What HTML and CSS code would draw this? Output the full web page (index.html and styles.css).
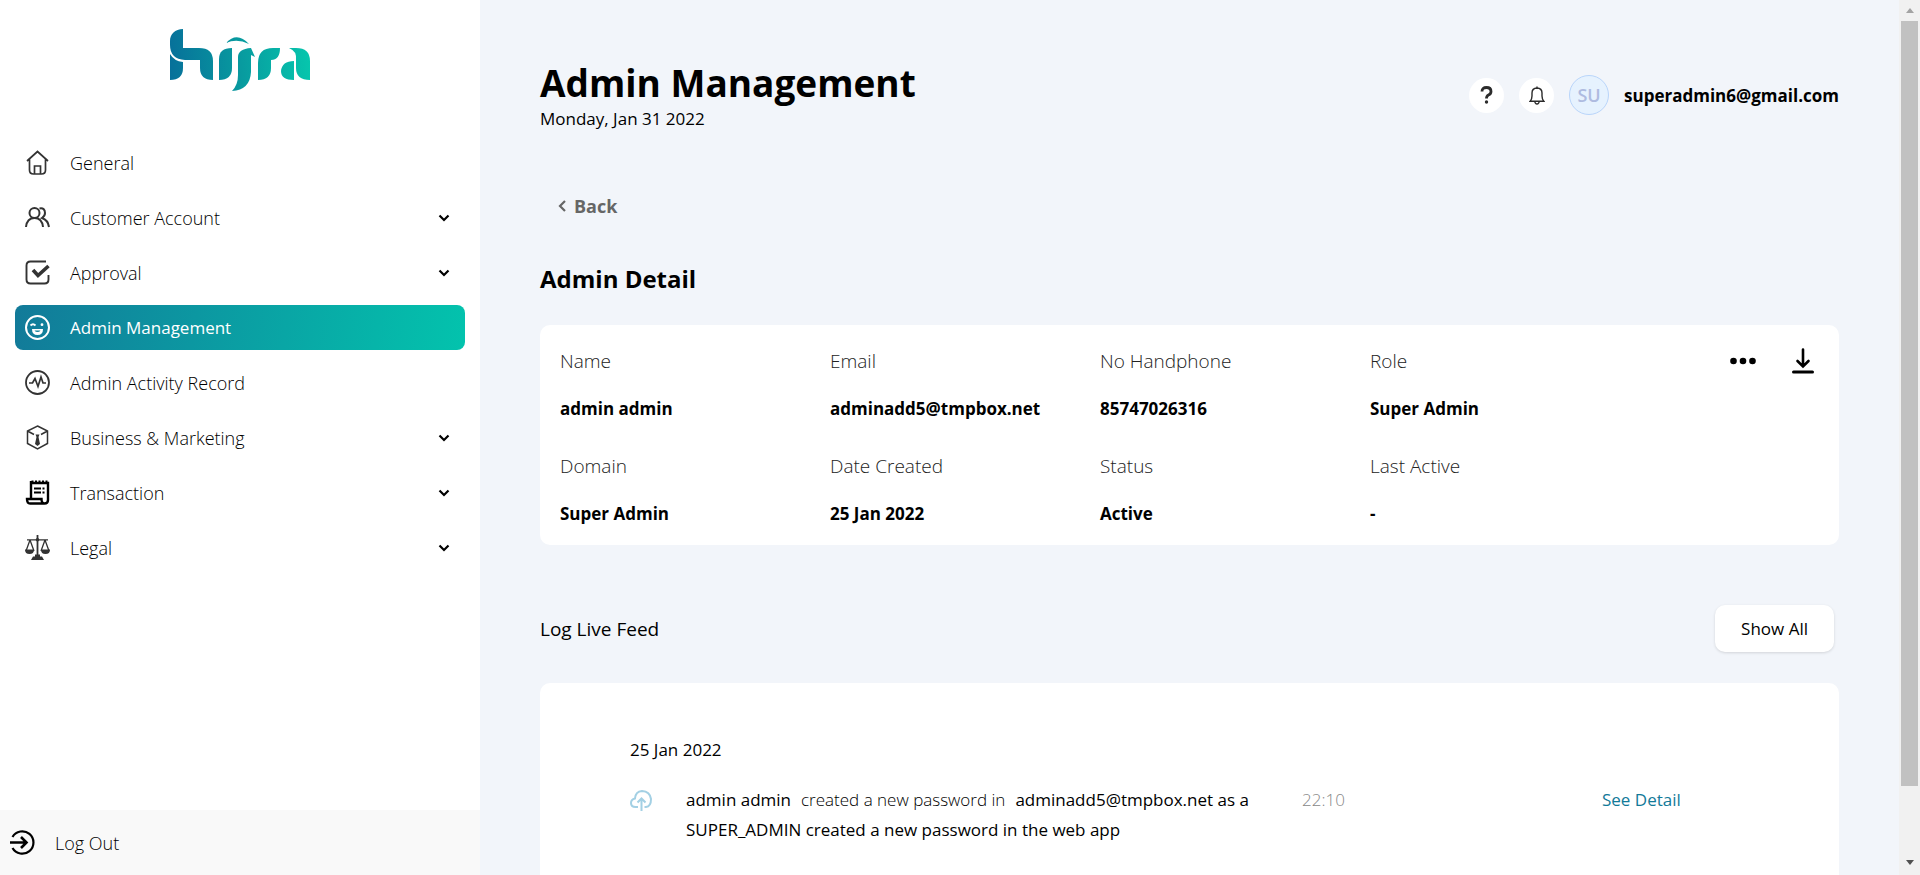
FILE: index.html
```html
<!DOCTYPE html>
<html lang="en">
<head>
<meta charset="utf-8">
<title>Admin Management</title>
<link rel="stylesheet" href="styles.css">
</head>
<body>
<svg class="defs" aria-hidden="true">
  <symbol id="chevron" viewBox="0 0 12 12"><path d="M1.500 3.500 6 8l4.500-4.500" fill="none" stroke="currentColor" stroke-width="2.200"/></symbol>
</svg>
<div class="app">
  <aside class="sidebar">
    <a class="logo" href="#" aria-label="hijra">
      <svg viewBox="0 0 140 62" width="140" height="62">
        <defs><linearGradient id="brand" gradientUnits="userSpaceOnUse" x1="0" y1="30" x2="140" y2="24"><stop offset="0" stop-color="#07719a"/><stop offset=".5" stop-color="#089a9f"/><stop offset="1" stop-color="#06c6ad"/></linearGradient></defs>
        <g fill="url(#brand)">
          <path d="M0 12C0 5 5 0 13 0V19H29Q43 19 43 32V51Q30 51 30 39V31H15Q0 30 0 16Z"/>
          <path d="M0 25Q4 32 13 33V39Q13 51 0 51Z"/>
          <path d="M49 30Q49 19 62 19V39Q62 51 49 51Z"/>
          <path d="M56 14Q67 2 79 15Q67 9 56 14Z"/>
          <path d="M68 28Q68 20 81 19L85 28 81 26V43Q80 61 62 62Q68 56 68 46Z"/>
          <path d="M88 34Q88 19 103 19H110Q110 31 101 31V39Q101 51 88 51Z"/>
          <path d="M124 32V51Q111 51 111 42Q112 32 124 32ZM119 19H126Q140 19 140 32V51Q126 51 126 39V31Q127 22 119 19Z"/>
        </g>
      </svg>
    </a>
    <nav class="nav">
      <a class="item" href="#">
        <svg class="icon" viewBox="0 0 25 25"><path d="M2 11 12.500 1.500 23 11M4.500 9.500V20q0 4 4 4h8q4 0 4-4V9.500M9.500 24v-8h6v8" fill="none" stroke="currentColor" stroke-width="1.700"/></svg>
        <span>General</span></a>
      <a class="item" href="#">
        <svg class="icon" viewBox="0 0 25 25"><g fill="none" stroke="currentColor" stroke-width="2"><circle cx="9.500" cy="8" r="5"/><path d="M1 22Q2 13 9.500 13T18 22M14.500 3.500Q20 2.500 20 8 20 11 17 13 23 15 24 22"/></g></svg>
        <span>Customer Account</span><svg class="chev"><use href="#chevron"/></svg></a>
      <a class="item" href="#">
        <svg class="icon" viewBox="0 0 25 25"><path d="M21 1.500H5.500q-4 0-4 4v14q0 4 4 4h14q4 0 4-4V15" fill="none" stroke="currentColor" stroke-width="1.900"/><path d="m8 10 5 5.500L23.500 6" fill="none" stroke="currentColor" stroke-width="3.600"/></svg>
        <span>Approval</span><svg class="chev"><use href="#chevron"/></svg></a>
      <a class="item active" href="#" aria-current="page">
        <svg class="icon" viewBox="0 0 25 25"><circle cx="12.500" cy="12.500" r="11.500" fill="none" stroke="currentColor" stroke-width="2"/><path d="M5.500 10.500Q8 8 10.500 10.500" fill="none" stroke="currentColor" stroke-width="1.800"/><circle cx="17" cy="9.700" r="1.400" fill="currentColor"/><path d="M7 14h11q0 6-5.500 6T7 14Z" fill="currentColor"/><path d="M9.500 15.500h6q-1 1.500-3 1.500t-3-1.500Z" fill="#12839a"/></svg>
        <span>Admin Management</span></a>
      <a class="item" href="#">
        <svg class="icon" viewBox="0 0 25 25"><g fill="none" stroke="currentColor" stroke-width="1.800"><circle cx="12.500" cy="12.500" r="11.500"/><path d="M4 13h3.500L10 8.500l3 8L16 7l2 6h3" stroke-width="1.700"/></g></svg>
        <span>Admin Activity Record</span></a>
      <a class="item" href="#">
        <svg class="icon" viewBox="0 0 25 25"><path d="M12.500 1 22.500 6v12.500l-10 5.500-10-5.500V6ZM2.500 6 9 9.500M22.500 6 16 9.500" fill="none" stroke="currentColor" stroke-width="1.500"/><path d="M10.500 9.500h4l-1 2.500 1.500 7-2.500 2-2.500-2 1.500-7Z" fill="currentColor"/></svg>
        <span>Business &amp; Marketing</span><svg class="chev"><use href="#chevron"/></svg></a>
      <a class="item" href="#">
        <svg class="icon strong" viewBox="0 0 25 25"><path d="M6 1v18M6 3h17V20q0 3.500-3.500 3.500H5Q2 23.500 2 19h14.500q0 4.500 3 4.500" fill="none" stroke="currentColor" stroke-width="2.400"/><path d="M6.500 1.300H23" stroke="currentColor" stroke-width="1.800" stroke-dasharray="2 1.500"/><path d="M9 8.500h7M9 12.500h7M17.500 8.500h2M17.500 12.500h2" stroke="currentColor" stroke-width="2"/></svg>
        <span>Transaction</span><svg class="chev"><use href="#chevron"/></svg></a>
      <a class="item" href="#">
        <svg class="icon" viewBox="0 0 25 25"><g fill="none" stroke="currentColor" stroke-width="1.300"><path d="M2 4.800h21M5 5 1 16M5 5l4 11M20 5l-4 11M20 5l4 11"/><path d="M12.500 0v20" stroke-width="1.800"/></g><path d="M0 14.500h9q0 4.500-4.500 4.500T0 14.500ZM16 14.500h9q0 4.500-4.500 4.500T16 14.500ZM10 19.500h5v2h-5ZM8 21.500h9l2 3.500H6Z" fill="currentColor"/><circle cx="12.500" cy="4.800" r="1.800" fill="currentColor"/></svg>
        <span>Legal</span><svg class="chev"><use href="#chevron"/></svg></a>
    </nav>
    <a class="logout" href="#">
      <svg class="icon strong" viewBox="0 0 25 25"><path d="M2.500 7A11.200 11.200 0 1 1 2.500 18" fill="none" stroke="currentColor" stroke-width="2.200"/><path d="M0 12.500H16M11 7l5.500 5.500L11 18" fill="none" stroke="currentColor" stroke-width="2.600"/></svg>
      <span>Log Out</span></a>
  </aside>

  <main class="main">
    <header class="head">
      <div>
        <h1>Admin Management</h1>
        <p class="date">Monday, Jan 31 2022</p>
      </div>
      <div class="tools">
        <button class="round" type="button" aria-label="Help"><svg width="13" height="18" viewBox="0 0 13 18"><path d="M2 5.500Q2 1.500 6.500 1.500T11 5.500Q11 8 8.500 9 6.500 10 6.500 12.500" fill="none" stroke="currentColor" stroke-width="2.800"/><circle cx="6.500" cy="16" r="1.700" fill="currentColor"/></svg></button>
        <button class="round" type="button" aria-label="Notifications"><svg width="16" height="19" viewBox="0 0 16 19"><path d="M1.200 15.200Q3 13 3 10V7q0-4.800 5-5 5 .2 5 5v3q0 3 1.800 5.200ZM8 2V.5M5.800 15.500q.3 2.500 2.200 2.500t2.200-2.500" fill="none" stroke="currentColor" stroke-width="1.400"/></svg></button>
        <span class="avatar">SU</span>
        <span class="email">superadmin6@gmail.com</span>
      </div>
    </header>

    <a class="back" href="#"><svg width="8" height="14" viewBox="0 0 8 14"><path d="M7 2 2 7l5 5" fill="none" stroke="currentColor" stroke-width="2.200"/></svg>Back</a>

    <h2>Admin Detail</h2>
    <section class="card detail">
      <dl class="fields">
        <div><dt>Name</dt><dd>admin admin</dd></div>
        <div><dt>Email</dt><dd>adminadd5@tmpbox.net</dd></div>
        <div><dt>No Handphone</dt><dd>85747026316</dd></div>
        <div><dt>Role</dt><dd>Super Admin</dd></div>
        <div><dt>Domain</dt><dd>Super Admin</dd></div>
        <div><dt>Date Created</dt><dd>25 Jan 2022</dd></div>
        <div><dt>Status</dt><dd>Active</dd></div>
        <div><dt>Last Active</dt><dd>-</dd></div>
      </dl>
      <div class="actions">
        <button type="button" aria-label="More"><svg width="26" height="26" viewBox="0 0 26 26" fill="currentColor"><circle cx="3.500" cy="13" r="3.300"/><circle cx="13" cy="13" r="3.300"/><circle cx="22.500" cy="13" r="3.300"/></svg></button>
        <button type="button" aria-label="Download"><svg width="22" height="26" viewBox="0 0 22 26" fill="none" stroke="currentColor" stroke-linecap="round"><path d="M11 1.500V18M5.500 13 11 18.500 16.500 13" stroke-width="2.600"/><path d="M1.500 24h19" stroke-width="3"/></svg></button>
      </div>
    </section>

    <div class="feed-head">
      <h3>Log Live Feed</h3>
      <button class="show" type="button">Show All</button>
    </div>
    <section class="card feed">
      <h4>25 Jan 2022</h4>
      <div class="entry">
        <svg width="22" height="22" viewBox="0 0 22 22"><g fill="none" stroke="#a3d0e4" stroke-width="2"><path d="M8 17H5.500Q1 17 1 13 1 9.500 5 8.500 5.500 1.500 12 1 20 1.500 21 9 21 16.500 16 17H14.500"/><path d="M11.500 21V9.500M7.500 12.500l4-4 4 4"/></g></svg>
        <p>admin admin<span class="soft">created a new password in</span>adminadd5@tmpbox.net as a SUPER_ADMIN created a new password in the web app</p>
        <time>22:10</time>
        <a href="#">See Detail</a>
      </div>
    </section>
  </main>

  <div class="scrollbar" aria-hidden="true">
    <svg width="8" height="5" viewBox="0 0 8 5"><path d="M0 5 4 0l4 5Z" fill="#a3a3a3"/></svg>
    <span class="thumb"></span>
    <svg width="8" height="5" viewBox="0 0 8 5"><path d="M0 0h8L4 5Z" fill="#505050"/></svg>
  </div>
</div>
</body>
</html>
```
FILE: styles.css
```css
* { box-sizing: border-box; }
body, h1, h2, h3, h4, p, dl, dd { margin: 0; }
body { font-family: "Open Sans", "Noto Sans", sans-serif; font-size: 17px; color: #000; background: #f2f5fa; }
a { color: inherit; text-decoration: none; }
button { font: inherit; color: inherit; border: 0; padding: 0; background: none; cursor: pointer; }
svg { display: block; flex: none; }
.defs { display: none; }

.app { display: grid; grid-template-columns: 25% minmax(0, 1fr) 21px; height: 100vh; overflow: hidden; }

.sidebar { display: flex; flex-direction: column; background: #fff; }
.logo { align-self: center; padding: 29px 0 49px; }
.nav { flex: 1; display: flex; flex-direction: column; gap: 10px; padding: 0 15px; }
.item { display: flex; align-items: center; gap: 20px; height: 45px; padding: 0 15px 0 10px; border-radius: 8px; font-size: 18px; font-weight: 300; }
.item span { flex: 1; }
.icon { width: 25px; height: 25px; color: #333; }
.icon.strong { color: #000; }
.chev { width: 12px; height: 12px; }
.item.active { color: #fff; font-size: 17px; font-weight: 500; background: linear-gradient(100deg, #127a99, #03c3ad); }
.item.active .icon { color: #fff; }
.logout { display: flex; align-items: center; gap: 20px; height: 65px; padding-left: 10px; background: #f9f9f9; font-size: 18px; font-weight: 300; }

.main { overflow: hidden; padding: 60px 60px 0; }
.head { display: flex; justify-content: space-between; align-items: flex-start; }
h1 { font-size: 37px; line-height: 46px; font-weight: 700; }
.date { line-height: 26px; }
.tools { display: flex; align-items: center; gap: 15px; padding-top: 15px; }
.round { display: grid; place-items: center; width: 35px; height: 35px; border-radius: 50%; background: #fff; color: #2b2b2b; }
.avatar { display: grid; place-items: center; width: 40px; height: 40px; border: 1px solid #b9d5fa; border-radius: 50%; background: #e6f2fe; color: #aebbe0; font-size: 18px; font-weight: 600; }
.email { font-weight: 700; }

.back { display: flex; width: fit-content; align-items: center; gap: 8px; margin: 63px 0 0 18px; line-height: 22px; font-size: 18px; font-weight: 700; color: #666; }
h2 { margin: 46px 0 30px; font-size: 24px; line-height: 32px; font-weight: 700; }
.card { background: #fff; border-radius: 10px; }
.detail { display: flex; justify-content: space-between; padding: 20px 25px 0 20px; min-height: 220px; }
.fields { flex: 1; max-width: 1080px; display: grid; grid-template-columns: repeat(4, 1fr); align-content: start; gap: 25px 0; }
.fields div { display: grid; gap: 16px; }
dt, dd { line-height: 32px; }
dt { font-size: 19px; font-weight: 300; color: #222; }
dd { font-weight: 700; }
.actions { display: flex; align-items: flex-start; gap: 36px; padding-top: 3px; }

.feed-head { display: flex; justify-content: space-between; align-items: center; margin: 60px 5px 31px 0; }
h3 { font-size: 19px; font-weight: 400; }
.show { height: 47px; padding: 0 26px; border-radius: 10px; background: #fff; box-shadow: 0 1px 3px #0002; }
.feed { padding: 52px 90px 100px; min-height: 260px; }
h4 { font-size: 17px; line-height: 30px; font-weight: 400; }
.entry { display: grid; grid-template-columns: 56px minmax(0, 616px) minmax(0, 300px) 1fr; margin-top: 20px; line-height: 30px; }
.entry p { max-width: 580px; }
.entry svg { margin-top: 5px; }
.soft { margin: 0 10px; font-weight: 300; }
time { font-weight: 300; color: #888; }
.entry a { color: #127a99; }

.scrollbar { display: flex; flex-direction: column; align-items: center; padding: 8px 2px 10px; background: #f1f1f1; }
.thumb { width: 17px; height: 765px; margin: 8px 0 auto; background: #c1c1c1; }
```
